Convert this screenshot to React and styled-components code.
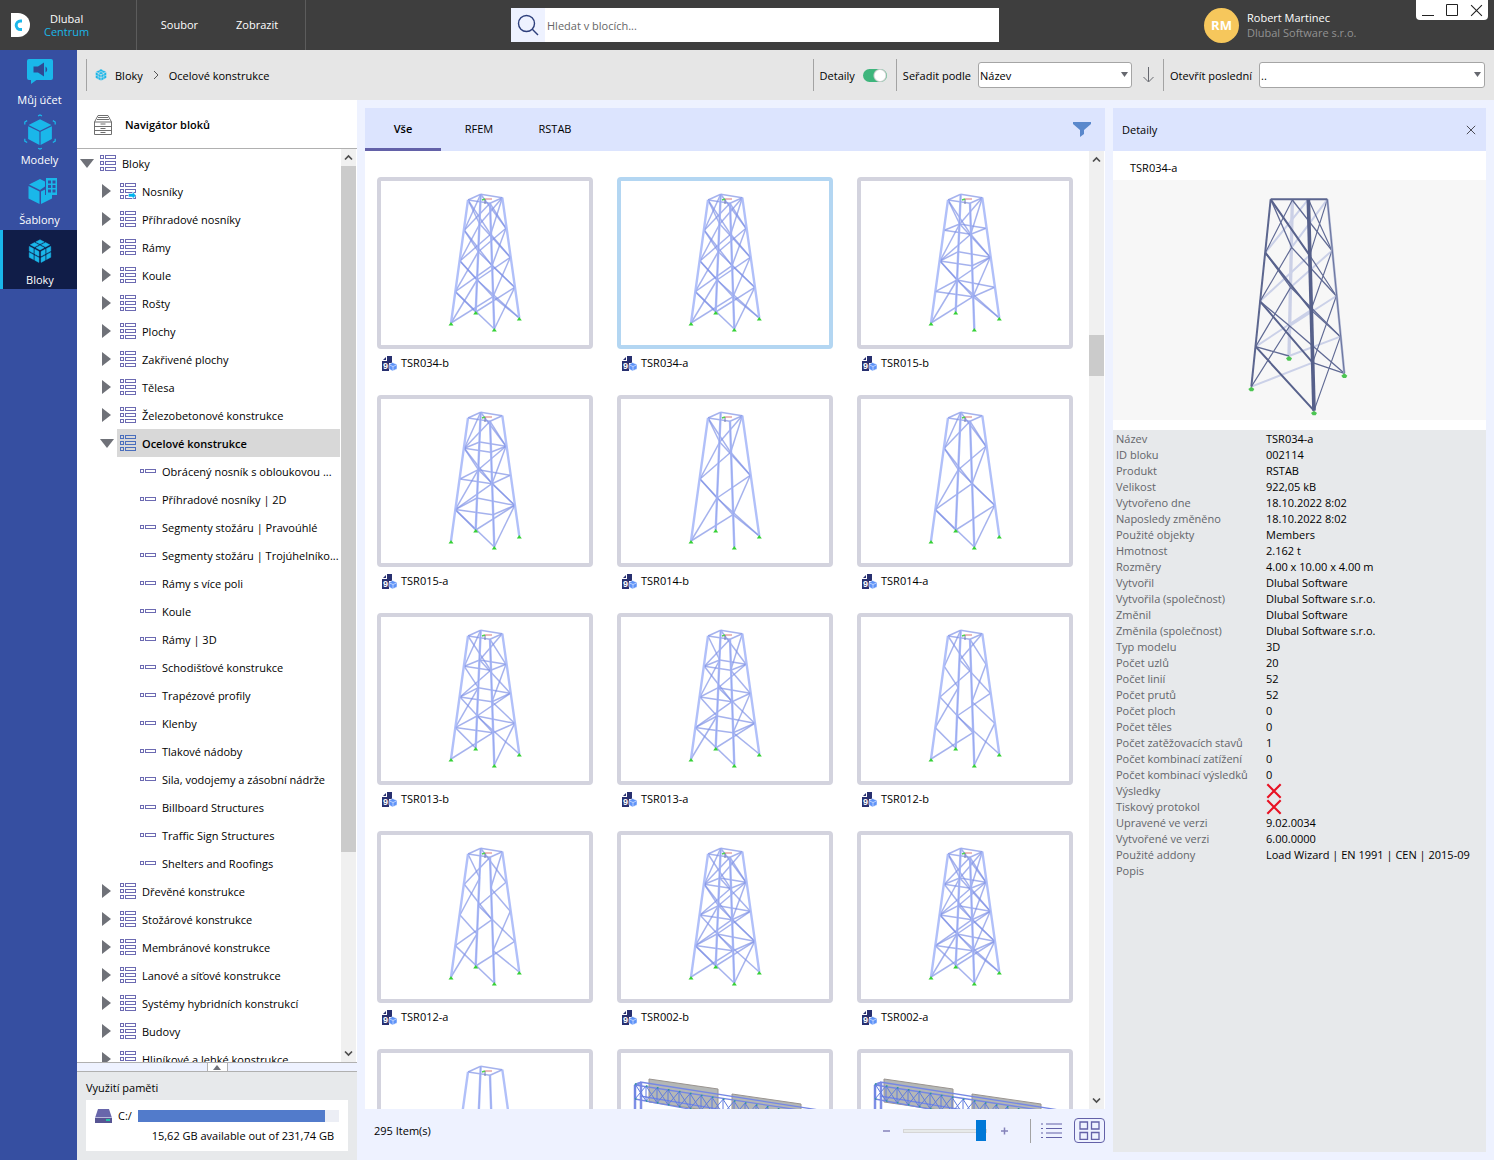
import React, { useState } from "react";
import styled, { createGlobalStyle, css } from "styled-components";

const c = {
  bar: "#3e3e3e",
  barLine: "#5c5c5c",
  rail: "#364fa1",
  railActive: "#101d48",
  cyan: "#1ab7ea",
  tool: "#e6e6e6",
  page: "#eef2ff",
  head: "#dce4fe",
  purple: "#6361a8",
  panel: "#e7e9eb",
  line: "#b0b0b0",
  grey: "#6f7178",
};

const Global = createGlobalStyle`
  *, *::before, *::after { box-sizing: border-box; }
  body { margin: 0; }
  body, button, input, select {
    font-family: "Open Sans", "Noto Sans", "Liberation Sans", sans-serif;
    font-size: 11px;
    line-height: 16px;
    color: #000;
  }
  button { border: 0; padding: 0; background: none; }
  ul { list-style: none; margin: 0; padding: 0; }
  svg { display: block; flex: none; }
`;

const Shell = styled.div`
  display: grid;
  grid-template-rows: 50px minmax(0, 1fr);
  height: 100vh;
`;

/* ---------- title bar ---------- */
const TitleBar = styled.header`
  position: relative;
  display: flex;
  align-items: center;
  background: ${c.bar};
  color: #fff;
`;
const Brand = styled.div`
  display: flex;
  align-items: center;
  gap: 13px;
  width: 137px;
  height: 50px;
  padding-left: 11px;
  border-right: 1px solid ${c.barLine};
`;
const BrandName = styled.div`
  text-align: center;
  line-height: 13px;
  span { display: block; color: ${c.cyan}; }
`;
const MenuBar = styled.nav`
  display: flex;
  align-items: center;
  justify-content: center;
  gap: 38px;
  width: 169px;
  height: 50px;
  padding-right: 3px;
  border-right: 1px solid ${c.barLine};
`;
const MenuButton = styled.button`
  color: #fff;
`;
const Spacer = styled.div`
  flex: 1;
`;
const SearchBox = styled.label`
  display: flex;
  width: 488px;
  height: 34px;
  background: #fff;
`;
const SearchIcon = styled.span`
  display: grid;
  place-items: center;
  width: 34px;
  background: ${c.page};
`;
const SearchInput = styled.input`
  flex: 1;
  border: 0;
  outline: 0;
  padding: 2px 2px 0;
  &::placeholder { color: #666; opacity: 1; }
`;
const User = styled.div`
  display: flex;
  align-items: center;
  gap: 8px;
  width: 290px;
`;
const Avatar = styled.div`
  display: grid;
  place-items: center;
  width: 35px;
  height: 35px;
  border-radius: 50%;
  background: #f6c75c;
  font-weight: 700;
  font-size: 13px;
`;
const UserText = styled.div`
  line-height: 15px;
  span { display: block; color: #929292; }
`;
const WindowButtons = styled.div`
  position: absolute;
  top: 0;
  right: 6px;
  display: flex;
  width: 72px;
  height: 20px;
  border-radius: 0 0 4px 4px;
  background: #fff;
`;
const WindowButton = styled.button`
  flex: 1;
  display: grid;
  place-items: center;
`;

/* ---------- left rail ---------- */
const Main = styled.div`
  display: grid;
  grid-template-columns: 77px minmax(0, 1fr);
  min-height: 0;
`;
const Rail = styled.nav`
  background: ${c.rail};
`;
const RailButton = styled.button`
  display: flex;
  flex-direction: column;
  align-items: center;
  justify-content: space-between;
  width: 77px;
  height: 60px;
  padding: 4px 0 2px 2px;
  color: #fff;
  ${(p) =>
    p.$active &&
    css`
      height: 59px;
      padding-left: 0;
      padding-bottom: 1px;
      border-left: 3px solid ${c.cyan};
      background: ${c.railActive};
    `}
`;

/* ---------- toolbar ---------- */
const Work = styled.div`
  display: grid;
  grid-template-rows: 50px minmax(0, 1fr);
  min-height: 0;
  background: ${c.page};
`;
const Toolbar = styled.div`
  display: flex;
  align-items: center;
  gap: 6px;
  padding: 0 9px;
  background: ${c.tool};
`;
const Rule = styled.span`
  width: 1px;
  height: ${(p) => p.$h || 32}px;
  background: #a3a3a3;
`;
const Crumbs = styled.nav`
  display: flex;
  align-items: center;
  gap: 8px;
  padding-left: 2px;
`;
const Crumb = styled.a`
  padding-top: 2px;
  color: #000;
  text-decoration: none;
`;
const Toggle = styled.input`
  appearance: none;
  width: 24px;
  height: 13px;
  margin: 0 3px 0 8px;
  border-radius: 7px;
  background: radial-gradient(circle at 17px 50%, #fff 5px, #c9cccb 6px, transparent 7px), #3eb57c;
`;
const LabelText = styled.span`
  display: block;
  padding-top: 2px;
`;
const ToggleLabel = styled.label`
  display: flex;
  align-items: center;
`;
const Field = styled.div`
  display: flex;
  align-items: center;
  gap: 7px;
`;
const SelectWrap = styled.span`
  position: relative;
  width: ${(p) => p.$w}px;
  svg { position: absolute; right: 4px; top: 10px; pointer-events: none; }
`;
const Select = styled.select`
  appearance: none;
  display: block;
  width: 100%;
  height: 26px;
  padding: 2px 4px 0 0;
  text-indent: 1px;
  border: 1px solid #a5a5a5;
  border-radius: 3px;
  background: #fff;
`;
const SortButton = styled.button`
  width: 19px;
  display: grid;
  place-items: center;
`;

/* ---------- columns ---------- */
const Columns = styled.div`
  display: grid;
  grid-template-columns: 280px minmax(0, 1fr) 373px;
  column-gap: 8px;
  padding-right: 8px;
  min-height: 0;
`;
const Navigator = styled.aside`
  display: flex;
  flex-direction: column;
  min-height: 0;
  background: #fff;
`;
const NavHead = styled.h2`
  display: flex;
  align-items: center;
  gap: 13px;
  height: 49px;
  margin: 0;
  padding: 2px 0 0 17px;
  border-bottom: 1px solid ${c.line};
  font-size: 11px;
  font-weight: 600;
`;
const TreeArea = styled.div`
  display: flex;
  flex: 1;
  min-height: 0;
  overflow: hidden;
  padding-right: 1px;
`;
const Tree = styled.ul`
  flex: 1;
  min-width: 0;
`;
const TreeRow = styled.div`
  display: flex;
  align-items: center;
  height: 28px;
  padding-left: ${(p) => p.$depth * 20}px;
`;
const Twist = styled.button`
  display: grid;
  place-items: center;
  width: 20px;
  height: 28px;
`;
const NodeButton = styled.button`
  display: flex;
  flex: 1;
  align-items: center;
  gap: 6px;
  height: 28px;
  margin-right: 1px;
  padding-left: 3px;
  white-space: nowrap;
  overflow: hidden;
  span { padding-top: 2px; }
  ${(p) =>
    p.$active &&
    css`
      background: #d8d8d8;
      font-weight: 600;
    `}
`;
const Track = styled.div`
  display: flex;
  flex-direction: column;
  width: 15px;
  background: #f0f0f0;
`;
const TrackButton = styled.button`
  display: grid;
  place-items: center;
  height: 17px;
  width: 15px;
`;
const TrackBody = styled.div`
  display: flex;
  flex-direction: column;
  flex: 1;
`;
const TrackGap = styled.div`
  flex: ${(p) => p.$part};
`;
const Thumb = styled.div`
  flex: ${(p) => p.$part};
  background: #cbcbcb;
`;
const Strip = styled.div`
  display: flex;
  justify-content: center;
  height: 9px;
  border-top: 1px solid ${c.line};
  background: ${c.page};
`;
const StripButton = styled.button`
  display: grid;
  place-items: center;
  width: 21px;
  height: 8px;
  border: solid ${c.line};
  border-width: 0 1px;
  background: #fff;
`;
const Memory = styled.section`
  padding: 8px 9px 9px;
  border-top: 1px solid ${c.line};
  background: ${c.panel};
`;
const MemoryTitle = styled.h3`
  margin: 0 0 4px;
  font-size: 11px;
  font-weight: 400;
`;
const MemoryCard = styled.div`
  padding: 7px 9px;
  background: #fff;
`;
const Drive = styled.label`
  display: flex;
  align-items: center;
  gap: 6px;
  height: 18px;
`;
const Usage = styled.progress`
  appearance: none;
  flex: 1;
  height: 12px;
  border: 0;
  background: #eceef5;
  &::-webkit-progress-bar { background: #eceef5; }
  &::-webkit-progress-value { background: #527bcb; }
`;
const Free = styled.p`
  margin: 3px 5px 0;
  text-align: right;
`;

/* ---------- gallery ---------- */
const Gallery = styled.main`
  display: flex;
  flex-direction: column;
  min-height: 0;
  padding: 8px 0;
`;
const Tabs = styled.div`
  display: flex;
  align-items: center;
  height: 43px;
  padding-right: 14px;
  background: ${c.head};
`;
const Tab = styled.button`
  width: 76px;
  height: 43px;
  border-bottom: 3px solid ${(p) => (p.$active ? c.purple : "transparent")};
  padding-top: 1px;
  font-weight: ${(p) => (p.$active ? 600 : 400)};
`;
const Scroll = styled.div`
  display: flex;
  flex: 1;
  min-height: 0;
  padding-right: 1px;
  background: #fff;
  overflow: hidden;
`;
const Grid = styled.div`
  display: grid;
  flex: 1;
  grid-template-columns: repeat(auto-fill, 216px);
  grid-auto-rows: 194px;
  gap: 24px;
  padding: 26px 12px 0;
`;
const Card = styled.figure`
  margin: 0;
`;
const Frame = styled.button`
  display: block;
  width: 216px;
  height: 172px;
  border: 4px solid ${(p) => (p.$active ? "#b3d6f2" : "#d3d3de")};
  border-radius: 4px;
  background: #fff;
`;
const Caption = styled.figcaption`
  display: flex;
  align-items: center;
  gap: 4px;
  height: 28px;
  padding-left: 5px;
`;
const StatusBar = styled.footer`
  display: flex;
  align-items: center;
  height: 43px;
  padding-left: 9px;
`;
const Zoom = styled.input`
  appearance: none;
  width: 84px;
  height: 22px;
  margin: 0 14px 0 13px;
  background: transparent;
  &::-webkit-slider-runnable-track {
    height: 4px;
    border: 1px solid #d6d6d6;
    background: #e7eaea;
  }
  &::-webkit-slider-thumb {
    appearance: none;
    width: 10px;
    height: 21px;
    margin-top: -10px;
    background: #0078d7;
  }
`;
const ViewButtons = styled.div`
  display: flex;
  align-items: center;
  gap: 10px;
  margin-left: 22px;
`;
const ViewButton = styled.button`
  display: grid;
  place-items: center;
  ${(p) =>
    p.$active &&
    css`
      width: 31px;
      height: 25px;
      margin-left: 2px;
      border: 1px solid ${c.purple};
      border-radius: 4px;
    `}
`;

/* ---------- details ---------- */
const Details = styled.aside`
  display: flex;
  flex-direction: column;
  padding: 8px 0;
  min-height: 0;
`;
const DetailsHead = styled.header`
  display: flex;
  align-items: center;
  justify-content: space-between;
  height: 43px;
  padding: 0 10px 0 9px;
  background: ${c.head};
`;
const DetailsName = styled.div`
  padding: 9px 17px 4px;
  background: #fff;
`;
const Preview = styled.div`
  background: #f7f7f7;
  border-bottom: 10px solid #fff;
  svg { width: 100%; height: 240px; }
`;
const Facts = styled.div`
  flex: 1;
  padding: 1px 3px;
  background: ${c.panel};
`;
const FactTable = styled.table`
  border-collapse: collapse;
  th, td { height: 16px; padding: 0; text-align: left; font-weight: 400; }
  th { width: 150px; color: #63656a; }
`;

/* ---------- drawings ---------- */
const Logo = () => (
  <svg width="20" height="24" viewBox="0 0 20 24">
    <path d="M0 0h7a12 12 0 0 1 0 24H0z" fill="#fff" />
    <path d="M11 8h-1.500a4.300 4.300 0 0 0 0 8.600H11" fill="none" stroke={c.cyan} strokeWidth="3" />
  </svg>
);

const Magnifier = () => (
  <svg width="22" height="22" viewBox="0 0 22 22" fill="none" stroke="#2d3f7c" strokeWidth="1.400">
    <circle cx="9.500" cy="9.500" r="8" />
    <path d="M15.300 15.300l5.700 5.700" />
  </svg>
);

const tiles = () => {
  const out = [];
  const faces = [
    [[12, 0], [5.5, 2.9], [-5.5, 2.9]],
    [[0.6, 6.3], [5.5, 2.9], [0, 6.2]],
    [[12.4, 12.1], [5.5, -2.9], [0, 6.2]],
  ];
  const k = 0.76;
  faces.forEach(([o, u, v], f) => {
    for (let i = 0; i < 2; i++)
      for (let j = 0; j < 2; j++) {
        const x = o[0] + u[0] * (i + 0.12) + v[0] * (j + 0.12);
        const y = o[1] + u[1] * (i + 0.12) + v[1] * (j + 0.12);
        out.push(
          <path
            key={`${f}${i}${j}`}
            d={`M${x} ${y}l${u[0] * k} ${u[1] * k}l${v[0] * k} ${v[1] * k}l${-u[0] * k} ${-u[1] * k}z`}
          />
        );
      }
  });
  return out;
};
const Rubik = ({ size }) => (
  <svg width={size} height={size} viewBox="0 0 24 25" fill={c.cyan} stroke={c.cyan} strokeWidth="0.500" strokeLinejoin="round">
    {tiles()}
  </svg>
);

const railIcons = {
  account: (
    <svg width="40" height="34" viewBox="0 0 40 34" fill={c.cyan}>
      <path d="M9 5h22a2 2 0 0 1 2 2v17a2 2 0 0 1-2 2H16.500L11 30v-4H9a2 2 0 0 1-2-2V7a2 2 0 0 1 2-2z" />
      <path d="M13.500 12.500h4.500l6-4v14l-6-4h-4.500zM25.500 12.500a3.500 3.500 0 0 1 0 6z" fill="#2f4893" />
    </svg>
  ),
  models: (
    <svg width="40" height="38" viewBox="0 2 40 40" fill={c.cyan}>
      <path d="M20 7.500l12 6-12 6-12-6zM7.500 14.800l11.900 6v13.700l-11.900-6.200zM32.500 14.800l-11.900 6v13.700l11.900-6.200z" />
      <path d="M18 4l2-1 2 1M18 38l2 1 2-1M4 13v-2.500L6.500 9M36 13v-2.500L33.500 9M4 28v2.500L6.500 32M36 28v2.500L33.500 32" fill="none" stroke={c.cyan} strokeWidth="1.300" />
    </svg>
  ),
  templates: (
    <svg width="40" height="34" viewBox="0 0 40 34" fill={c.cyan}>
      <path d="M20 5l5 2.500v5L20 16 9 10.500zM8.500 12l11 5.500V30l-11-5.500zM21 17.500l4-2V21h7v3.500L21 30z" />
      <path d="M26 4h11v17H26zM28 6.500v3h3v-3zm4.500 0v3h3v-3zM28 11v3h3v-3zm4.500 0v3h3v-3zM28 15.500v3h3v-3zm4.500 0v3h3v-3z" fillRule="evenodd" />
    </svg>
  ),
  blocks: (
    <svg width="26" height="34" viewBox="-1 -5 26 34" fill={c.cyan} stroke={c.cyan} strokeWidth="0.500" strokeLinejoin="round">
      {tiles()}
    </svg>
  ),
};

const Cabinet = () => (
  <svg width="18" height="20" viewBox="0 0 18 20" fill="none" stroke="#6f6f6f">
    <path d="M.5 7L4 .5h10L17.500 7v12.500H.5zM.5 7h17M.5 11.500h17M.5 15.500h17M4 2.500h10M3 4.500h12M6.500 9h5M6.500 13.500h5M6.500 17.500h5" />
  </svg>
);

const GroupIcon = ({ color, link }) => (
  <svg width="16" height="16" viewBox="0 0 16 16" fill="none" stroke={color || "#6c6ab2"}>
    {[0.5, 6.5, 12.5].map((y) => (
      <g key={y}>
        <rect x="0.5" y={y} width="3" height="3" />
        <rect x="5.500" y={y} width="10" height="3" />
      </g>
    ))}
    {link && <path d="M8.500 10.500h4V8.500l3.500 4-3.500 3.500v-2h-4z" fill="#00b4f0" stroke="#fff" strokeWidth="0.500" />}
  </svg>
);
const LeafIcon = () => (
  <svg width="16" height="16" viewBox="0 0 16 16" fill="none" stroke="#6c6ab2">
    <rect x="0.500" y="6.500" width="3" height="3" />
    <rect x="5.500" y="6.500" width="10" height="3" />
  </svg>
);
const Twisty = ({ open }) =>
  open ? (
    <svg width="14" height="9" viewBox="0 0 14 9"><path d="M0 0h14L7 9z" fill={c.grey} /></svg>
  ) : (
    <svg width="14" height="14" viewBox="0 0 14 14"><path d="M2 0v14l9-7z" fill={c.grey} /></svg>
  );
const Chevron = ({ d, w = 9 }) => (
  <svg width={w} height="9" viewBox="0 0 9 9" fill="none" stroke="#4d4d4d" strokeWidth="1.700"><path d={d} /></svg>
);
const Caret = () => (
  <svg width="7" height="5" viewBox="0 0 7 5"><path d="M0 0h7L3.500 5z" fill="#66686f" /></svg>
);
const DriveIcon = () => (
  <svg width="17" height="14" viewBox="0 0 17 14">
    <path d="M3 0h11l3 9H0z" fill="#6866ab" />
    <path d="M0 9h17v5H0z" fill="#575593" />
    <path d="M0 8.500h17" stroke="#b9b8dc" />
    <path d="M11 11h4" stroke="#21c5a5" strokeWidth="2" />
  </svg>
);
const ItemIcon = () => (
  <svg width="15" height="15" viewBox="0 0 15 15">
    <path d="M5 0h5v7H7v8H0V5h5z" fill="#283070" />
    <path d="M1 4L4 1v3z" fill="#283070" />
    <text x="1" y="13" fontFamily="Liberation Sans, sans-serif" fontWeight="700" fontSize="9" fill="#fff">9</text>
    <path d="M10.500 6.500l4.500 2v4.500l-4.500 2-3.500-2V8.500z" fill="#5f93f7" stroke="#fff" strokeWidth="0.500" />
    <path d="M7.500 9l3.500 1.500L14.500 9M11 10.500V15" stroke="#dfe9ff" strokeWidth="0.700" fill="none" />
  </svg>
);
const Funnel = () => (
  <svg width="18" height="15" viewBox="0 0 18 15"><path d="M0 0h18v2l-7 6v4l-4 3V8L0 2z" fill="#5a88cc" /></svg>
);
const Cross = ({ size, color, w }) => (
  <svg width={size} height={size} viewBox="0 0 12 12" stroke={color} strokeWidth={w}><path d="M1 1l10 10M11 1L1 11" /></svg>
);

/* Joints of the mast, top to bottom, for each of its four legs. */
const mast = {
  L: [[87, 19], [83.3, 49.3], [79, 80], [74.3, 110.6], [70, 142]],
  B: [[99.7, 13.3], [98.7, 43], [97.3, 70.7], [96, 99], [94.7, 131]],
  F: [[109, 22.3], [109.7, 53.3], [111, 84.7], [112, 115.7], [113.3, 148]],
  R: [[121.3, 16.7], [125, 47.3], [129.3, 76.3], [133.7, 106.3], [138.3, 137]],
};
const faces = ["LF", "FR", "LB", "BR"];
const flip = { x: 2, down: 0, up: 1 };

/* One brace mode per face: "x" crosses, "down" starts at the first leg, "up" at the second. */
const bracing = {
  cross: { f: ["x", "x", "x", "x"] },
  k1h: { f: ["down", "up", "down", "up"], h: true },
  k2h: { f: ["up", "down", "up", "down"], h: true },
  k1: { f: ["down", "up", "down", "up"] },
  k2: { f: ["up", "down", "up", "down"] },
  z1h: { f: ["down", "down", "up", "up"], h: true },
  z2h: { f: ["up", "up", "down", "down"], h: true },
  z1: { f: ["down", "down", "up", "up"] },
  z2: { f: ["up", "up", "down", "down"] },
  m1: { f: ["x", "down", "up", "x"], h: true },
  m2: { f: ["x", "x", "down", "x"], h: true },
  none: { f: [] },
};

const seg = (a, b) => `M${a[0]} ${a[1]}L${b[0]} ${b[1]}`;

function Mast({ kind }) {
  const { f, h } = bracing[kind];
  const back = [];
  faces.forEach((pair, n) => {
    const [p, q] = [mast[pair[0]], mast[pair[1]]];
    back.push(seg(p[0], q[0]));
    for (let i = 0; i < 4 && f[n]; i++) {
      const mode = flip[f[n]];
      const even = (i + mode) % 2 === 0;
      if (mode === 2 || even) back.push(seg(p[i], q[i + 1]));
      if (mode === 2 || !even) back.push(seg(q[i], p[i + 1]));
      if (h && i) back.push(seg(p[i], q[i]));
    }
  });
  const legs = Object.values(mast);
  return (
    <svg width="208" height="164" viewBox="0 0 208 164" fill="none">
      {back.map((d, i) => (
        <path key={i} d={d} stroke="#7f92e6" strokeWidth="1.500" opacity="0.700" />
      ))}
      <path d={legs.map((l) => seg(l[0], l[4])).join("")} stroke="#a9b9f8" strokeWidth="2.400" opacity="0.900" />
      <path d={seg(mast.F[0], mast.F[4]) + seg(mast.B[0], mast.B[4])} stroke="#8f9fea" strokeWidth="0.700" />
      <path d="M104 18v5" stroke="#6d78a8" />
      <path d="M104 18h7" stroke="#d87878" />
      <path d="M101 19l3-1" stroke="#4fd04f" strokeWidth="1.500" />
      {legs.map((l) => (
        <path key={l[4][0]} d={`M${l[4][0]} ${l[4][1] - 1}l2.500 3.500h-5z`} fill="#35d035" />
      ))}
    </svg>
  );
}

function Gantry({ shift }) {
  const px = 28 - shift;
  let web = "";
  let knots = "";
  for (let i = 0; i < 17; i++) {
    const x = 14 + i * 11;
    const y = 31 + i * 1.9;
    web += `M${x} ${y}l11 17M${x} ${y + 15}l11 -13M${x} ${y}v15`;
    knots += `M${x} ${y}h1.500M${x} ${y + 15}h1.500`;
  }
  return (
    <svg width="208" height="164" viewBox="0 0 208 164" fill="none">
      <path d="M14 32v130M20 29v130M14 32l5-2" stroke="#7f8fe6" strokeWidth="2.500" />
      <g fill="#b4b7b6" stroke="#9a9490">
        <path d={`M${px} 26L${px + 69} 36V59L${px} 49z`} />
        <path d="M111 41L180 51v23L111 64z" />
      </g>
      <path d="M14 32L198 60M19 29L198 57M14 46l184 34M19 43l179 30" stroke="#7587e4" strokeWidth="1.300" />
      <path d={web} stroke="#5f7be0" />
      <path d={knots} stroke="#2f9a96" strokeWidth="1.500" />
    </svg>
  );
}

const big = {
  L: [[482, 298], [466, 458], [450, 604], [437, 740], [424, 860]],
  B: [[547, 300], [545, 442], [542, 562], [539, 678], [537, 768]],
  F: [[595, 298], [599, 466], [603, 630], [608, 788], [612, 932]],
  R: [[652, 298], [666, 452], [679, 588], [691, 710], [703, 820]],
};
function BigMast() {
  const { L, B, F, R } = big;
  const run = (p, q) => [0, 1, 2, 3].map((i) => seg(p[i], q[i + 1])).join("");
  const leg = (l) => seg(l[0], l[4]);
  return (
    <svg viewBox="9 240 1119 720" fill="none" aria-label="TSR034-a">
      <path d={leg(B)} stroke="#cbd0e6" strokeWidth="10" />
      <path d={run(F, L) + run(R, B)} stroke="#cbd1e8" strokeWidth="6" />
      <path d={run(B, L) + run(R, F) + run(F, R)} stroke="#606a94" strokeWidth="3.500" />
      <path d={run(L, B) + run(B, R)} stroke="#606a94" strokeWidth="4" />
      <path d={run(L, F)} stroke="#58628c" strokeWidth="6" />
      <path d={leg(R)} stroke="#a9b1cf" strokeWidth="7" />
      <path d={leg(R)} stroke="#69739d" strokeWidth="3" />
      <path d={leg(L)} stroke="#5c668f" strokeWidth="6" />
      <path d={seg(L[0], R[0])} stroke="#5c668f" strokeWidth="6" />
      <path d={leg(F)} stroke="#56608a" strokeWidth="11" />
      {[L, B, F, R].map((l) => (
        <path key={l[4][0]} d={`M${l[4][0]} ${l[4][1]}l9 7-4 7h-9l-5-7z`} fill="#4cc552" />
      ))}
    </svg>
  );
}

/* ---------- content ---------- */
const before = [
  "Nosníky", "Příhradové nosníky", "Rámy", "Koule", "Rošty", "Plochy",
  "Zakřivené plochy", "Tělesa", "Železobetonové konstrukce",
];
const leaves = [
  "Obrácený nosník s obloukovou ...", "Příhradové nosníky | 2D", "Segmenty stožáru | Pravoúhlé",
  "Segmenty stožáru | Trojúhelníko...", "Rámy s více poli", "Koule", "Rámy | 3D",
  "Schodišťové konstrukce", "Trapézové profily", "Klenby", "Tlakové nádoby",
  "Sila, vodojemy a zásobní nádrže", "Billboard Structures", "Traffic Sign Structures",
  "Shelters and Roofings",
];
const after = [
  "Dřevěné konstrukce", "Stožárové konstrukce", "Membránové konstrukce",
  "Lanové a síťové konstrukce", "Systémy hybridních konstrukcí", "Budovy",
  "Hliníkové a lehké konstrukce",
];
const items = [
  ["TSR034-b", "cross"], ["TSR034-a", "cross"], ["TSR015-b", "k1h"],
  ["TSR015-a", "k2h"], ["TSR014-b", "k1"], ["TSR014-a", "k2"],
  ["TSR013-b", "z1h"], ["TSR013-a", "z2h"], ["TSR012-b", "z1"],
  ["TSR012-a", "z2"], ["TSR002-b", "m1"], ["TSR002-a", "m2"],
  ["", "none"], ["", "gantry", 0], ["", "gantry", 5],
];
const facts = [
  ["Název", "TSR034-a"], ["ID bloku", "002114"], ["Produkt", "RSTAB"], ["Velikost", "922,05 kB"],
  ["Vytvořeno dne", "18.10.2022 8:02"], ["Naposledy změněno", "18.10.2022 8:02"],
  ["Použité objekty", "Members"], ["Hmotnost", "2.162 t"], ["Rozměry", "4.00 x 10.00 x 4.00 m"],
  ["Vytvořil", "Dlubal Software"], ["Vytvořila (společnost)", "Dlubal Software s.r.o."],
  ["Změnil", "Dlubal Software"], ["Změnila (společnost)", "Dlubal Software s.r.o."],
  ["Typ modelu", "3D"], ["Počet uzlů", "20"], ["Počet linií", "52"], ["Počet prutů", "52"],
  ["Počet ploch", "0"], ["Počet těles", "0"], ["Počet zatěžovacích stavů", "1"],
  ["Počet kombinací zatížení", "0"], ["Počet kombinací výsledků", "0"],
  ["Výsledky", null], ["Tiskový protokol", null], ["Upravené ve verzi", "9.02.0034"],
  ["Vytvořené ve verzi", "6.00.0000"], ["Použité addony", "Load Wizard | EN 1991 | CEN | 2015-09"],
  ["Popis", ""],
];
const rail = [
  ["Můj účet", "account"], ["Modely", "models"], ["Šablony", "templates"], ["Bloky", "blocks"],
];

function Node({ name, depth, open, leaf, active, link, children }) {
  return (
    <li>
      <TreeRow $depth={depth}>
        {!leaf && <Twist aria-label={name}><Twisty open={open} /></Twist>}
        <NodeButton $active={active}>
          {leaf ? <LeafIcon /> : <GroupIcon link={link} color={active && "#4a6ebd"} />}
          <span>{name}</span>
        </NodeButton>
      </TreeRow>
      {children && <ul>{children}</ul>}
    </li>
  );
}

function ScrollTrack({ parts }) {
  return (
    <Track>
      <TrackButton aria-label="Nahoru"><Chevron d="M1 6.500L4.500 3 8 6.500" /></TrackButton>
      <TrackBody>
        <TrackGap $part={parts[0]} />
        <Thumb $part={parts[1]} />
        <TrackGap $part={parts[2]} />
      </TrackBody>
      <TrackButton aria-label="Dolů"><Chevron d="M1 2.500L4.500 6 8 2.500" /></TrackButton>
    </Track>
  );
}

export default function App() {
  const [details, setDetails] = useState(true);
  const [zoom, setZoom] = useState(100);
  const [selected, setSelected] = useState("TSR034-a");
  return (
    <Shell>
      <Global />
      <TitleBar>
        <Brand>
          <Logo />
          <BrandName>Dlubal<span>Centrum</span></BrandName>
        </Brand>
        <MenuBar>
          <MenuButton>Soubor</MenuButton>
          <MenuButton>Zobrazit</MenuButton>
        </MenuBar>
        <Spacer />
        <SearchBox>
          <SearchIcon><Magnifier /></SearchIcon>
          <SearchInput aria-label="Hledat" placeholder="Hledat v blocích..." />
        </SearchBox>
        <Spacer />
        <User>
          <Avatar>RM</Avatar>
          <UserText>Robert Martinec<span>Dlubal Software s.r.o.</span></UserText>
        </User>
        <WindowButtons>
          <WindowButton aria-label="Minimalizovat">
            <svg width="12" height="12" viewBox="0 0 12 12" stroke="#222"><path d="M0 11.500h12" /></svg>
          </WindowButton>
          <WindowButton aria-label="Maximalizovat">
            <svg width="12" height="12" viewBox="0 0 12 12" stroke="#222" fill="none"><path d="M.5.5h11v11H.5z" /></svg>
          </WindowButton>
          <WindowButton aria-label="Zavřít okno"><Cross size={13} color="#222" w={1} /></WindowButton>
        </WindowButtons>
      </TitleBar>

      <Main>
        <Rail>
          {rail.map(([name, icon]) => (
            <RailButton key={name} $active={icon === "blocks"}>
              {railIcons[icon]}
              {name}
            </RailButton>
          ))}
        </Rail>

        <Work>
          <Toolbar>
            <Rule />
            <Crumbs>
              <Rubik size={12} />
              <Crumb href="#bloky">Bloky</Crumb>
              <svg width="10" height="10" viewBox="0 0 10 10" fill="none" stroke="#555"><path d="M3 1l4 4-4 4" /></svg>
              <Crumb href="#ocelove">Ocelové konstrukce</Crumb>
            </Crumbs>
            <Spacer />
            <Rule />
            <ToggleLabel>
              <LabelText>Detaily</LabelText>
              <Toggle type="checkbox" checked={details} onChange={(e) => setDetails(e.target.checked)} />
            </ToggleLabel>
            <Rule />
            <Field>
              <label htmlFor="sort"><LabelText>Seřadit podle</LabelText></label>
              <SelectWrap $w={154}>
                <Select id="sort"><option>Název</option></Select>
                <Caret />
              </SelectWrap>
            </Field>
            <SortButton aria-label="Pořadí">
              <svg width="12" height="16" viewBox="0 0 12 16" fill="none" stroke="#66686f"><path d="M6.500 0v14.500M1.500 10l5 5 5-5" /></svg>
            </SortButton>
            <Rule />
            <Field>
              <label htmlFor="recent"><LabelText>Otevřít poslední</LabelText></label>
              <SelectWrap $w={226}>
                <Select id="recent"><option>..</option></Select>
                <Caret />
              </SelectWrap>
            </Field>
          </Toolbar>

          <Columns>
            <Navigator>
              <NavHead><Cabinet />Navigátor bloků</NavHead>
              <TreeArea>
                <Tree>
                  <Node name="Bloky" depth={0} open>
                    {before.map((n, i) => <Node key={n} name={n} depth={1} link={i === 0} />)}
                    <Node name="Ocelové konstrukce" depth={1} open active>
                      {leaves.map((n) => <Node key={n} name={n} depth={3} leaf />)}
                    </Node>
                    {after.map((n) => <Node key={n} name={n} depth={1} />)}
                  </Node>
                </Tree>
                <ScrollTrack parts={[0, 686, 193]} />
              </TreeArea>
              <Strip>
                <StripButton aria-label="Sbalit">
                  <svg width="8" height="5" viewBox="0 0 8 5"><path d="M4 0l4 5H0z" fill={c.grey} /></svg>
                </StripButton>
              </Strip>
              <Memory>
                <MemoryTitle>Využití paměti</MemoryTitle>
                <MemoryCard>
                  <Drive>
                    <DriveIcon />
                    C:/
                    <Usage value={93} max={100} />
                  </Drive>
                  <Free>15,62 GB available out of 231,74 GB</Free>
                </MemoryCard>
              </Memory>
            </Navigator>

            <Gallery>
              <Tabs>
                <Tab $active>Vše</Tab>
                <Tab>RFEM</Tab>
                <Tab>RSTAB</Tab>
                <Spacer />
                <button aria-label="Filtr"><Funnel /></button>
              </Tabs>
              <Scroll>
                <Grid>
                  {items.map(([name, kind, shift], i) => (
                    <Card key={i}>
                      <Frame $active={name === selected} aria-label={name || kind} onClick={() => name && setSelected(name)}>
                        {kind === "gantry" ? <Gantry shift={shift} /> : <Mast kind={kind} />}
                      </Frame>
                      {name && <Caption><ItemIcon />{name}</Caption>}
                    </Card>
                  ))}
                </Grid>
                <ScrollTrack parts={[167, 41, 716]} />
              </Scroll>
              <StatusBar>
                295 Item(s)
                <Spacer />
                <svg width="7" height="8" viewBox="0 0 7 8" stroke="#8482ba" strokeWidth="1.500"><path d="M0 4h7" /></svg>
                <Zoom type="range" aria-label="Velikost náhledu" value={zoom} onChange={(e) => setZoom(+e.target.value)} />
                <svg width="7" height="8" viewBox="0 0 7 8" stroke="#8482ba" strokeWidth="1.500"><path d="M0 4h7M3.500 .5v7" /></svg>
                <ViewButtons>
                  <Rule $h={24} />
                  <ViewButton aria-label="Seznam">
                    <svg width="21" height="16" viewBox="0 0 21 16" stroke={c.purple} strokeWidth="1.200">
                      <path d="M5 1h16M5 5.500h16M5 10h16M5 14.500h16M0 1h2M0 5.500h2M0 10h2M0 14.500h2" />
                    </svg>
                  </ViewButton>
                  <ViewButton $active aria-label="Mřížka">
                    <svg width="21" height="19" viewBox="0 0 21 19" fill="none" stroke={c.purple} strokeWidth="1.300">
                      <path d="M1 1h7.500v7H1zM12.500 1H20v7h-7.500zM1 11.500h7.500v7H1zM12.500 11.500H20v7h-7.500z" />
                    </svg>
                  </ViewButton>
                </ViewButtons>
              </StatusBar>
            </Gallery>

            <Details>
              <DetailsHead>
                Detaily
                <button aria-label="Zavřít"><Cross size={10} color="#4c4c55" w={1.2} /></button>
              </DetailsHead>
              <DetailsName>{selected}</DetailsName>
              <Preview><BigMast /></Preview>
              <Facts>
                <FactTable>
                  <tbody>
                    {facts.map(([k, v]) => (
                      <tr key={k}>
                        <th scope="row">{k}</th>
                        <td>{v === null ? <Cross size={16} color="#e81123" w={1.6} /> : v}</td>
                      </tr>
                    ))}
                  </tbody>
                </FactTable>
              </Facts>
            </Details>
          </Columns>
        </Work>
      </Main>
    </Shell>
  );
}
